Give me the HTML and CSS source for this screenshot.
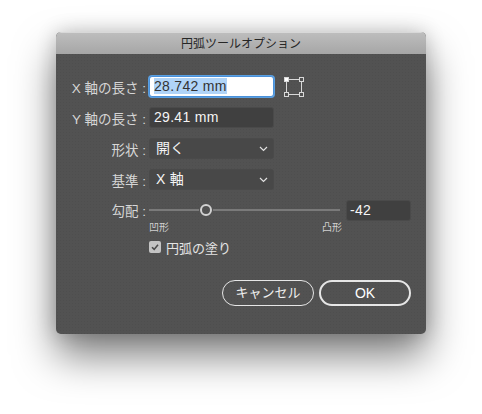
FILE: index.html
```html
<!DOCTYPE html>
<html lang="ja">
<head>
    <meta charset="UTF-8">
    <meta name="viewport" content="width=device-width, initial-scale=1.0">
    <title>円弧ツールオプション</title>
    <link rel="stylesheet" href="styles.css">
</head>
<body>
    <div class="dialog">
        <div class="title-bar">円弧ツールオプション</div>
        <div class="content">
            <div class="row">
                <div class="label">X 軸の長さ :</div>
                <div class="field field-active"><span class="selected">28.742 mm</span></div>
                <svg class="origin-icon" width="20" height="20" viewBox="0 0 20 20">
                    <path d="M4 2.5H16M2.5 4V16M17.5 4V16M4 17.5H16" fill="none" stroke="#d8d8d8" stroke-width="1"/>
                    <rect x="0.5" y="0.5" width="4" height="4" fill="#fff" stroke="#d8d8d8"/>
                    <rect x="15.5" y="0.5" width="4" height="4" fill="none" stroke="#d8d8d8"/>
                    <rect x="0.5" y="15.5" width="4" height="4" fill="none" stroke="#d8d8d8"/>
                    <rect x="15.5" y="15.5" width="4" height="4" fill="none" stroke="#d8d8d8"/>
                </svg>
            </div>
            <div class="row">
                <div class="label">Y 軸の長さ :</div>
                <div class="field">29.41 mm</div>
            </div>
            <div class="row">
                <div class="label">形状 :</div>
                <div class="select">
                    <span>開く</span>
                    <svg width="9" height="6" viewBox="0 0 9 6"><path d="M1 1L4.5 4.5L8 1" fill="none" stroke="#e0e0e0" stroke-width="1.2"/></svg>
                </div>
            </div>
            <div class="row">
                <div class="label">基準 :</div>
                <div class="select">
                    <span>X 軸</span>
                    <svg width="9" height="6" viewBox="0 0 9 6"><path d="M1 1L4.5 4.5L8 1" fill="none" stroke="#e0e0e0" stroke-width="1.2"/></svg>
                </div>
            </div>
            <div class="row slider-row">
                <div class="label">勾配 :</div>
                <div class="slider">
                    <div class="track"></div>
                    <div class="thumb"></div>
                    <div class="track track-right"></div>
                </div>
                <div class="field field-small">-42</div>
            </div>
            <div class="slider-labels">
                <span>凹形</span>
                <span>凸形</span>
            </div>
            <div class="check-row">
                <div class="checkbox">
                    <svg width="12" height="12" viewBox="0 0 12 12"><path d="M3 6.2L5.2 8.4L9 3.8" fill="none" stroke="#4a4a4a" stroke-width="1.6"/></svg>
                </div>
                <span>円弧の塗り</span>
            </div>
            <div class="buttons">
                <div class="btn">キャンセル</div>
                <div class="btn btn-default">OK</div>
            </div>
        </div>
    </div>
</body>
</html>
```

FILE: styles.css
```css
body {
    margin: 0;
    padding: 32px 0 0 56px;
    background-color: #fff;
    font-family: "Liberation Sans", "Noto Sans CJK JP", sans-serif;
    font-size: 13px;
    color: #e8e8e8;
    overflow: hidden;
    height: 382px;
}

.dialog {
    width: 370px;
    height: 302px;
    background-color: #525252;
    background-image: radial-gradient(rgba(0, 0, 0, 0.05) 1px, transparent 1px);
    background-size: 3px 3px;
    border-radius: 5px;
    box-shadow: 0 22px 40px rgba(0, 0, 0, 0.5), 0 0 20px rgba(0, 0, 0, 0.2);
    overflow: hidden;
}

.title-bar {
    height: 22px;
    box-sizing: border-box;
    border-top: 1px solid #d8d8d8;
    line-height: 22px;
    text-align: center;
    font-size: 12px;
    color: #262626;
    background: linear-gradient(#bdbdbd, #a6a6a6);
}

.content {
    padding: 22px 15px 0 0;
}

.row {
    display: flex;
    align-items: center;
    height: 21px;
    margin-bottom: 10px;
}

.label {
    width: 90px;
    margin-right: 2px;
    text-align: right;
    font-size: 13.5px;
    color: #d6d6d6;
    white-space: nowrap;
    flex-shrink: 0;
}

.field, .select {
    width: 125px;
    height: 21px;
    margin-left: 1px;
    box-sizing: border-box;
    border-radius: 3px;
    border: 1px solid #4a4a4a;
    background-color: #404040;
    padding-left: 4px;
    line-height: 19px;
    font-size: 14px;
    color: #f5f5f5;
    letter-spacing: 0.3px;
}

.field-active {
    background-color: #fff;
    color: #333;
    border: 1px solid #4a90d9;
    box-shadow: 0 0 0 1px #5a9fe0;
}

.selected {
    background-color: #b0d4f8;
}

.origin-icon {
    margin-left: 10px;
}

.select {
    display: flex;
    align-items: center;
    justify-content: space-between;
    background-color: #484848;
    padding: 0 5px 0 6px;
}

.slider-row {
    height: 20px;
    margin-bottom: 0;
}

.slider {
    width: 191px;
    margin: 0 2px 0 1px;
    display: flex;
    align-items: center;
}

.track {
    width: 50px;
    height: 2px;
    background-color: #7a7a7a;
}

.track-right {
    flex: 1;
}

.thumb {
    width: 8px;
    height: 8px;
    margin: 0 1px;
    border: 2px solid #d2d2d2;
    border-radius: 50%;
    flex-shrink: 0;
}

.field-small {
    width: 65px;
    margin-left: 4px;
    padding-left: 3px;
}

.slider-labels {
    width: 193px;
    margin: 1px 0 0 93px;
    display: flex;
    justify-content: space-between;
    font-size: 10px;
    line-height: 13px;
    color: #d0d0d0;
}

.check-row {
    display: flex;
    align-items: center;
    gap: 5px;
    margin: 5px 0 0 93px;
    height: 16px;
    color: #e4e4e4;
}

.checkbox {
    width: 12px;
    height: 12px;
    border-radius: 2px;
    background-color: #c4c4c4;
}

.checkbox svg {
    display: block;
}

.buttons {
    display: flex;
    justify-content: flex-end;
    gap: 5px;
    margin-top: 25px;
}

.btn {
    width: 92px;
    height: 26px;
    box-sizing: border-box;
    border: 1px solid #e6e6e6;
    border-radius: 13px;
    text-align: center;
    line-height: 24px;
    color: #f0f0f0;
}

.btn-default {
    border-width: 2px;
    line-height: 22px;
    font-size: 14px;
    color: #fff;
}
```
